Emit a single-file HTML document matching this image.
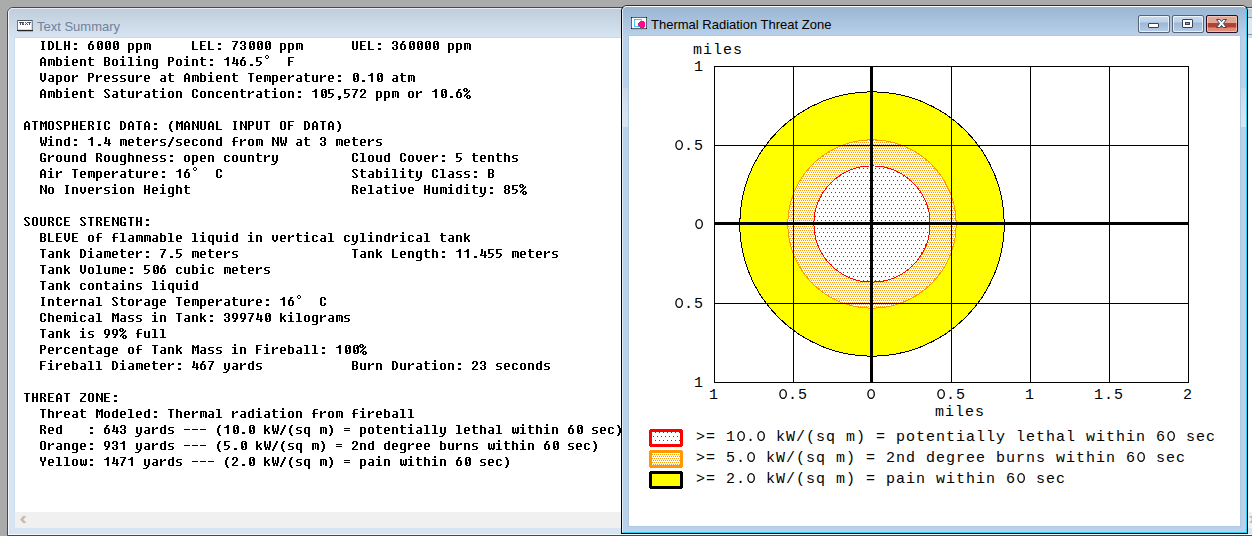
<!DOCTYPE html>
<html><head><meta charset="utf-8">
<style>
html,body{margin:0;padding:0;}
body{width:1252px;height:536px;overflow:hidden;position:relative;background:#ababab;font-family:"Liberation Sans",sans-serif;}
.abs{position:absolute;}
/* left window */
#lw{left:7px;top:7px;width:1300px;height:529px;box-sizing:border-box;border:1px solid #474849;border-radius:6px 6px 0 0;
 background:linear-gradient(to bottom,#bfcddb 0px,#d7e4f2 30px,#d7e4f2 100%);}
#lw .hl{left:0;top:0;right:0;bottom:0;border-left:1px solid #f4f8fc;border-top:1px solid #e6ecf6;border-bottom:1px solid #f4f8fc;border-radius:5px 5px 0 0;}
#lclient{left:7px;top:30px;width:1240px;height:474px;background:#fff;overflow:hidden;box-shadow:0 0 0 1px rgba(40,90,150,.07);}
#lscroll{left:7px;top:504px;width:1240px;height:16px;background:#f0f0f0;}
#ltitle{left:29px;top:11px;font-size:13px;color:#71829a;white-space:nowrap;}
/* right window */
#rw{left:621px;top:5px;width:627px;height:529px;box-sizing:border-box;border:1px solid #000;border-top-color:#2e2e2e;border-radius:6px 6px 0 0;
 background:linear-gradient(to bottom,#99b4d1 0px,#b9d1ea 30px,#b9d1ea 100%);}
#rw .cy{left:0;top:0;right:0;bottom:0;border-right:1px solid #28d2f2;border-bottom:1px solid #28d2f2;border-left:1px solid #e4edf6;border-top:1px solid #f8fbfe;border-radius:5px 5px 0 0;}
#rclient{left:7px;top:30px;width:611px;height:490px;background:#fff;overflow:hidden;box-shadow:0 0 0 1px rgba(40,90,150,.07);}
#rtitle{left:29px;top:11px;font-size:13px;color:#000;white-space:nowrap;}
.btn{top:9px;width:32px;height:18px;box-sizing:border-box;border:1px solid #5b6474;border-radius:2px;
 background:linear-gradient(to bottom,#c9dbef 0,#bcd2ea 6px,#9db7d4 7px,#b3cbe6 15px);}
.btn .in{left:0;top:0;right:0;bottom:0;border:1px solid rgba(255,255,255,.7);border-radius:2px;}
.cls{background:linear-gradient(to bottom,#e2a696 0,#e2a696 7px,#b3412f 7px,#b3412f 11px,#c3704f 11px,#c3704f 12px,#e08b78 12px,#e08b78 100%);border-color:#2d0a1e;}
svg text{font-family:"Liberation Mono",monospace;font-size:15px;letter-spacing:1px;fill:#000;}
</style></head><body>

<div id="lw" class="abs">
  <div class="abs hl"></div>
  <div id="ltitle" class="abs">Text Summary</div>
  <svg class="abs" style="left:9px;top:12px" width="16" height="12" viewBox="0 0 16 12" shape-rendering="crispEdges">
    <rect x="0" y="0" width="16" height="11" fill="#fff"/>
    <rect x="14" y="1" width="1" height="9" fill="#e6dcd6"/>
    <rect x="1" y="9" width="14" height="1" fill="#d9d9de"/>
    <rect x="0" y="0" width="16" height="1" fill="#4b5565"/>
    <rect x="0" y="0" width="1" height="11" fill="#6f7989"/>
    <rect x="15" y="0" width="1" height="11" fill="#7d8797"/>
    <rect x="0" y="10" width="16" height="1" fill="#262626"/>
    <rect x="1" y="11" width="15" height="1" fill="#bfae8e"/>
    <g fill="#4a5262">
      <rect x="2" y="2" width="3" height="1"/><rect x="3" y="3" width="1" height="2"/>
      <rect x="5" y="2" width="2" height="3"/><rect x="6" y="3" width="1" height="1" fill="#8a90a0"/>
      <rect x="8" y="2" width="1" height="1"/><rect x="10" y="2" width="1" height="1"/><rect x="9" y="3" width="1" height="1"/><rect x="8" y="4" width="1" height="1"/><rect x="10" y="4" width="1" height="1"/>
      <rect x="11" y="2" width="3" height="1"/><rect x="12" y="3" width="1" height="2"/>
    </g>
  </svg>
  <div id="lclient" class="abs"><svg class="abs" style="left:-15px;top:-38px" width="1252" height="536" shape-rendering="crispEdges"><defs><path id="g0" d="M0 2h3v1h-3zM-1 3h2v1h-2zM2 3h2v1h-2zM-1 4h2v1h-2zM2 4h2v1h-2zM5 4h1v1h-1zM0 5h3v1h-3zM4 5h2v1h-2zM3 6h2v1h-2zM2 7h2v1h-2zM1 8h2v1h-2zM0 9h2v1h-2zM3 9h3v1h-3zM0 10h1v1h-1zM2 10h2v1h-2zM5 10h2v1h-2zM2 11h2v1h-2zM5 11h2v1h-2zM3 12h3v1h-3z"/><path id="g1" d="M3 3h2v1h-2zM2 4h2v1h-2zM2 5h2v1h-2zM1 6h2v1h-2zM1 7h2v1h-2zM1 8h2v1h-2zM1 9h2v1h-2zM1 10h2v1h-2zM2 11h2v1h-2zM2 12h2v1h-2zM3 13h2v1h-2z"/><path id="g2" d="M1 3h2v1h-2zM2 4h2v1h-2zM2 5h2v1h-2zM3 6h2v1h-2zM3 7h2v1h-2zM3 8h2v1h-2zM3 9h2v1h-2zM3 10h2v1h-2zM2 11h2v1h-2zM2 12h2v1h-2zM1 13h2v1h-2z"/><path id="g3" d="M2 10h3v1h-3zM2 11h3v1h-3zM3 12h2v1h-2zM2 13h2v1h-2z"/><path id="g4" d="M0 7h6v1h-6z"/><path id="g5" d="M2 10h3v1h-3zM2 11h3v1h-3z"/><path id="g6" d="M4 3h2v1h-2zM4 4h2v1h-2zM3 5h2v1h-2zM3 6h2v1h-2zM2 7h2v1h-2zM2 8h2v1h-2zM1 9h2v1h-2zM1 10h2v1h-2zM0 11h2v1h-2zM0 12h2v1h-2z"/><path id="g7" d="M2 3h4v1h-4zM1 4h2v1h-2zM5 4h2v1h-2zM1 5h2v1h-2zM4 5h3v1h-3zM1 6h2v1h-2zM4 6h3v1h-3zM1 7h2v1h-2zM5 7h2v1h-2zM1 8h3v1h-3zM5 8h2v1h-2zM1 9h3v1h-3zM5 9h2v1h-2zM1 10h2v1h-2zM5 10h2v1h-2zM2 11h4v1h-4z"/><path id="g8" d="M3 3h2v1h-2zM2 4h3v1h-3zM0 5h5v1h-5zM3 6h2v1h-2zM3 7h2v1h-2zM3 8h2v1h-2zM3 9h2v1h-2zM3 10h2v1h-2zM3 11h2v1h-2z"/><path id="g9" d="M1 3h4v1h-4zM0 4h2v1h-2zM4 4h2v1h-2zM0 5h2v1h-2zM4 5h2v1h-2zM4 6h2v1h-2zM3 7h2v1h-2zM2 8h2v1h-2zM1 9h2v1h-2zM0 10h2v1h-2zM0 11h6v1h-6z"/><path id="g10" d="M1 3h4v1h-4zM0 4h2v1h-2zM4 4h2v1h-2zM0 5h2v1h-2zM4 5h2v1h-2zM4 6h2v1h-2zM2 7h3v1h-3zM4 8h2v1h-2zM0 9h2v1h-2zM4 9h2v1h-2zM0 10h2v1h-2zM4 10h2v1h-2zM1 11h4v1h-4z"/><path id="g11" d="M1 3h2v1h-2zM1 4h2v1h-2zM1 5h2v1h-2zM4 5h2v1h-2zM1 6h2v1h-2zM4 6h2v1h-2zM1 7h2v1h-2zM4 7h2v1h-2zM0 8h2v1h-2zM4 8h2v1h-2zM0 9h7v1h-7zM4 10h2v1h-2zM4 11h2v1h-2z"/><path id="g12" d="M0 3h6v1h-6zM0 4h2v1h-2zM0 5h2v1h-2zM0 6h2v1h-2zM0 7h5v1h-5zM4 8h2v1h-2zM4 9h2v1h-2zM3 10h2v1h-2zM0 11h4v1h-4z"/><path id="g13" d="M2 3h3v1h-3zM2 4h2v1h-2zM1 5h2v1h-2zM0 6h5v1h-5zM0 7h2v1h-2zM4 7h2v1h-2zM0 8h2v1h-2zM4 8h2v1h-2zM0 9h2v1h-2zM4 9h2v1h-2zM0 10h2v1h-2zM4 10h2v1h-2zM1 11h4v1h-4z"/><path id="g14" d="M0 3h6v1h-6zM4 4h2v1h-2zM3 5h2v1h-2zM3 6h2v1h-2zM2 7h2v1h-2zM2 8h2v1h-2zM1 9h2v1h-2zM1 10h2v1h-2zM1 11h2v1h-2z"/><path id="g15" d="M1 3h4v1h-4zM0 4h2v1h-2zM4 4h2v1h-2zM0 5h2v1h-2zM4 5h2v1h-2zM0 6h2v1h-2zM4 6h2v1h-2zM1 7h4v1h-4zM0 8h2v1h-2zM4 8h2v1h-2zM0 9h2v1h-2zM4 9h2v1h-2zM0 10h2v1h-2zM4 10h2v1h-2zM1 11h4v1h-4z"/><path id="g16" d="M1 3h4v1h-4zM0 4h2v1h-2zM4 4h2v1h-2zM0 5h2v1h-2zM4 5h2v1h-2zM0 6h2v1h-2zM4 6h2v1h-2zM0 7h2v1h-2zM4 7h2v1h-2zM1 8h5v1h-5zM3 9h2v1h-2zM2 10h2v1h-2zM1 11h3v1h-3z"/><path id="g17" d="M2 5h3v1h-3zM2 6h3v1h-3zM2 10h3v1h-3zM2 11h3v1h-3z"/><path id="g18" d="M0 6h6v1h-6zM0 8h6v1h-6z"/><path id="g19" d="M2 3h2v1h-2zM1 4h4v1h-4zM0 5h2v1h-2zM4 5h2v1h-2zM0 6h2v1h-2zM4 6h2v1h-2zM0 7h2v1h-2zM4 7h2v1h-2zM0 8h6v1h-6zM0 9h2v1h-2zM4 9h2v1h-2zM0 10h2v1h-2zM4 10h2v1h-2zM0 11h2v1h-2zM4 11h2v1h-2z"/><path id="g20" d="M0 3h5v1h-5zM0 4h2v1h-2zM4 4h2v1h-2zM0 5h2v1h-2zM4 5h2v1h-2zM0 6h2v1h-2zM4 6h2v1h-2zM0 7h5v1h-5zM0 8h2v1h-2zM4 8h2v1h-2zM0 9h2v1h-2zM4 9h2v1h-2zM0 10h2v1h-2zM4 10h2v1h-2zM0 11h5v1h-5z"/><path id="g21" d="M1 3h4v1h-4zM0 4h2v1h-2zM4 4h2v1h-2zM0 5h2v1h-2zM4 5h2v1h-2zM0 6h2v1h-2zM0 7h2v1h-2zM0 8h2v1h-2zM0 9h2v1h-2zM4 9h2v1h-2zM0 10h2v1h-2zM4 10h2v1h-2zM1 11h4v1h-4z"/><path id="g22" d="M0 3h4v1h-4zM0 4h2v1h-2zM3 4h2v1h-2zM0 5h2v1h-2zM4 5h2v1h-2zM0 6h2v1h-2zM4 6h2v1h-2zM0 7h2v1h-2zM4 7h2v1h-2zM0 8h2v1h-2zM4 8h2v1h-2zM0 9h2v1h-2zM4 9h2v1h-2zM0 10h2v1h-2zM3 10h2v1h-2zM0 11h4v1h-4z"/><path id="g23" d="M0 3h6v1h-6zM0 4h2v1h-2zM0 5h2v1h-2zM0 6h2v1h-2zM0 7h5v1h-5zM0 8h2v1h-2zM0 9h2v1h-2zM0 10h2v1h-2zM0 11h6v1h-6z"/><path id="g24" d="M0 3h6v1h-6zM0 4h2v1h-2zM0 5h2v1h-2zM0 6h2v1h-2zM0 7h5v1h-5zM0 8h2v1h-2zM0 9h2v1h-2zM0 10h2v1h-2zM0 11h2v1h-2z"/><path id="g25" d="M1 3h4v1h-4zM0 4h2v1h-2zM4 4h2v1h-2zM0 5h2v1h-2zM4 5h2v1h-2zM0 6h2v1h-2zM0 7h2v1h-2zM0 8h2v1h-2zM3 8h3v1h-3zM0 9h2v1h-2zM4 9h2v1h-2zM0 10h2v1h-2zM4 10h2v1h-2zM1 11h5v1h-5z"/><path id="g26" d="M0 3h2v1h-2zM4 3h2v1h-2zM0 4h2v1h-2zM4 4h2v1h-2zM0 5h2v1h-2zM4 5h2v1h-2zM0 6h2v1h-2zM4 6h2v1h-2zM0 7h6v1h-6zM0 8h2v1h-2zM4 8h2v1h-2zM0 9h2v1h-2zM4 9h2v1h-2zM0 10h2v1h-2zM4 10h2v1h-2zM0 11h2v1h-2zM4 11h2v1h-2z"/><path id="g27" d="M1 3h4v1h-4zM2 4h2v1h-2zM2 5h2v1h-2zM2 6h2v1h-2zM2 7h2v1h-2zM2 8h2v1h-2zM2 9h2v1h-2zM2 10h2v1h-2zM1 11h4v1h-4z"/><path id="g28" d="M0 3h2v1h-2zM0 4h2v1h-2zM0 5h2v1h-2zM0 6h2v1h-2zM0 7h2v1h-2zM0 8h2v1h-2zM0 9h2v1h-2zM0 10h2v1h-2zM0 11h6v1h-6z"/><path id="g29" d="M0 3h2v1h-2zM5 3h2v1h-2zM0 4h3v1h-3zM4 4h3v1h-3zM0 5h7v1h-7zM0 6h2v1h-2zM3 6h1v1h-1zM5 6h2v1h-2zM0 7h2v1h-2zM3 7h1v1h-1zM5 7h2v1h-2zM0 8h2v1h-2zM3 8h1v1h-1zM5 8h2v1h-2zM0 9h2v1h-2zM5 9h2v1h-2zM0 10h2v1h-2zM5 10h2v1h-2zM0 11h2v1h-2zM5 11h2v1h-2z"/><path id="g30" d="M0 3h2v1h-2zM5 3h2v1h-2zM0 4h3v1h-3zM5 4h2v1h-2zM0 5h3v1h-3zM5 5h2v1h-2zM0 6h2v1h-2zM3 6h1v1h-1zM5 6h2v1h-2zM0 7h2v1h-2zM3 7h1v1h-1zM5 7h2v1h-2zM0 8h2v1h-2zM4 8h3v1h-3zM0 9h2v1h-2zM4 9h3v1h-3zM0 10h2v1h-2zM5 10h2v1h-2zM0 11h2v1h-2zM5 11h2v1h-2z"/><path id="g31" d="M1 3h4v1h-4zM0 4h2v1h-2zM4 4h2v1h-2zM0 5h2v1h-2zM4 5h2v1h-2zM0 6h2v1h-2zM4 6h2v1h-2zM0 7h2v1h-2zM4 7h2v1h-2zM0 8h2v1h-2zM4 8h2v1h-2zM0 9h2v1h-2zM4 9h2v1h-2zM0 10h2v1h-2zM4 10h2v1h-2zM1 11h4v1h-4z"/><path id="g32" d="M0 3h5v1h-5zM0 4h2v1h-2zM4 4h2v1h-2zM0 5h2v1h-2zM4 5h2v1h-2zM0 6h2v1h-2zM4 6h2v1h-2zM0 7h5v1h-5zM0 8h2v1h-2zM0 9h2v1h-2zM0 10h2v1h-2zM0 11h2v1h-2z"/><path id="g33" d="M0 3h5v1h-5zM0 4h2v1h-2zM4 4h2v1h-2zM0 5h2v1h-2zM4 5h2v1h-2zM0 6h2v1h-2zM4 6h2v1h-2zM0 7h4v1h-4zM0 8h2v1h-2zM3 8h2v1h-2zM0 9h2v1h-2zM4 9h2v1h-2zM0 10h2v1h-2zM4 10h2v1h-2zM0 11h2v1h-2zM4 11h2v1h-2z"/><path id="g34" d="M1 3h4v1h-4zM0 4h2v1h-2zM4 4h2v1h-2zM0 5h2v1h-2zM1 6h2v1h-2zM2 7h2v1h-2zM3 8h2v1h-2zM4 9h2v1h-2zM0 10h2v1h-2zM4 10h2v1h-2zM1 11h4v1h-4z"/><path id="g35" d="M0 3h6v1h-6zM2 4h2v1h-2zM2 5h2v1h-2zM2 6h2v1h-2zM2 7h2v1h-2zM2 8h2v1h-2zM2 9h2v1h-2zM2 10h2v1h-2zM2 11h2v1h-2z"/><path id="g36" d="M0 3h2v1h-2zM4 3h2v1h-2zM0 4h2v1h-2zM4 4h2v1h-2zM0 5h2v1h-2zM4 5h2v1h-2zM0 6h2v1h-2zM4 6h2v1h-2zM0 7h2v1h-2zM4 7h2v1h-2zM0 8h2v1h-2zM4 8h2v1h-2zM0 9h2v1h-2zM4 9h2v1h-2zM0 10h2v1h-2zM4 10h2v1h-2zM1 11h4v1h-4z"/><path id="g37" d="M0 3h2v1h-2zM4 3h2v1h-2zM0 4h2v1h-2zM4 4h2v1h-2zM0 5h2v1h-2zM4 5h2v1h-2zM0 6h2v1h-2zM4 6h2v1h-2zM0 7h2v1h-2zM4 7h2v1h-2zM0 8h2v1h-2zM4 8h2v1h-2zM0 9h2v1h-2zM4 9h2v1h-2zM1 10h4v1h-4zM2 11h2v1h-2z"/><path id="g38" d="M0 3h2v1h-2zM5 3h2v1h-2zM0 4h2v1h-2zM5 4h2v1h-2zM0 5h2v1h-2zM5 5h2v1h-2zM0 6h2v1h-2zM3 6h1v1h-1zM5 6h2v1h-2zM0 7h2v1h-2zM3 7h1v1h-1zM5 7h2v1h-2zM0 8h2v1h-2zM3 8h1v1h-1zM5 8h2v1h-2zM1 9h5v1h-5zM1 10h2v1h-2zM4 10h2v1h-2zM1 11h2v1h-2zM4 11h2v1h-2z"/><path id="g39" d="M0 3h2v1h-2zM4 3h2v1h-2zM0 4h2v1h-2zM4 4h2v1h-2zM0 5h2v1h-2zM4 5h2v1h-2zM0 6h2v1h-2zM4 6h2v1h-2zM1 7h4v1h-4zM2 8h2v1h-2zM2 9h2v1h-2zM2 10h2v1h-2zM2 11h2v1h-2z"/><path id="g40" d="M0 3h6v1h-6zM4 4h2v1h-2zM4 5h2v1h-2zM3 6h2v1h-2zM2 7h2v1h-2zM1 8h2v1h-2zM0 9h2v1h-2zM0 10h2v1h-2zM0 11h6v1h-6z"/><path id="g41" d="M1 5h4v1h-4zM4 6h2v1h-2zM4 7h2v1h-2zM1 8h5v1h-5zM0 9h2v1h-2zM4 9h2v1h-2zM0 10h2v1h-2zM4 10h2v1h-2zM1 11h5v1h-5z"/><path id="g42" d="M0 3h2v1h-2zM0 4h2v1h-2zM0 5h5v1h-5zM0 6h2v1h-2zM4 6h2v1h-2zM0 7h2v1h-2zM4 7h2v1h-2zM0 8h2v1h-2zM4 8h2v1h-2zM0 9h2v1h-2zM4 9h2v1h-2zM0 10h2v1h-2zM4 10h2v1h-2zM0 11h5v1h-5z"/><path id="g43" d="M1 5h4v1h-4zM0 6h2v1h-2zM4 6h2v1h-2zM0 7h2v1h-2zM0 8h2v1h-2zM0 9h2v1h-2zM0 10h2v1h-2zM4 10h2v1h-2zM1 11h4v1h-4z"/><path id="g44" d="M4 3h2v1h-2zM4 4h2v1h-2zM1 5h5v1h-5zM0 6h2v1h-2zM4 6h2v1h-2zM0 7h2v1h-2zM4 7h2v1h-2zM0 8h2v1h-2zM4 8h2v1h-2zM0 9h2v1h-2zM4 9h2v1h-2zM0 10h2v1h-2zM4 10h2v1h-2zM1 11h5v1h-5z"/><path id="g45" d="M1 5h4v1h-4zM0 6h2v1h-2zM4 6h2v1h-2zM0 7h2v1h-2zM4 7h2v1h-2zM0 8h6v1h-6zM0 9h2v1h-2zM0 10h2v1h-2zM1 11h4v1h-4z"/><path id="g46" d="M2 3h4v1h-4zM1 4h2v1h-2zM1 5h2v1h-2zM1 6h2v1h-2zM0 7h6v1h-6zM1 8h2v1h-2zM1 9h2v1h-2zM1 10h2v1h-2zM1 11h2v1h-2z"/><path id="g47" d="M1 5h5v1h-5zM0 6h2v1h-2zM4 6h2v1h-2zM0 7h2v1h-2zM4 7h2v1h-2zM0 8h2v1h-2zM4 8h2v1h-2zM0 9h2v1h-2zM4 9h2v1h-2zM0 10h2v1h-2zM4 10h2v1h-2zM1 11h5v1h-5zM4 12h2v1h-2zM4 13h2v1h-2zM0 14h5v1h-5z"/><path id="g48" d="M0 3h2v1h-2zM0 4h2v1h-2zM0 5h5v1h-5zM0 6h2v1h-2zM4 6h2v1h-2zM0 7h2v1h-2zM4 7h2v1h-2zM0 8h2v1h-2zM4 8h2v1h-2zM0 9h2v1h-2zM4 9h2v1h-2zM0 10h2v1h-2zM4 10h2v1h-2zM0 11h2v1h-2zM4 11h2v1h-2z"/><path id="g49" d="M2 2h2v1h-2zM2 3h2v1h-2zM0 5h4v1h-4zM2 6h2v1h-2zM2 7h2v1h-2zM2 8h2v1h-2zM2 9h2v1h-2zM2 10h2v1h-2zM0 11h6v1h-6z"/><path id="g50" d="M0 3h2v1h-2zM0 4h2v1h-2zM0 5h2v1h-2zM4 5h2v1h-2zM0 6h2v1h-2zM3 6h2v1h-2zM0 7h4v1h-4zM0 8h4v1h-4zM0 9h2v1h-2zM3 9h2v1h-2zM0 10h2v1h-2zM4 10h2v1h-2zM0 11h2v1h-2zM4 11h2v1h-2z"/><path id="g51" d="M0 3h4v1h-4zM2 4h2v1h-2zM2 5h2v1h-2zM2 6h2v1h-2zM2 7h2v1h-2zM2 8h2v1h-2zM2 9h2v1h-2zM2 10h2v1h-2zM0 11h6v1h-6z"/><path id="g52" d="M0 5h6v1h-6zM0 6h2v1h-2zM3 6h1v1h-1zM5 6h2v1h-2zM0 7h2v1h-2zM3 7h1v1h-1zM5 7h2v1h-2zM0 8h2v1h-2zM3 8h1v1h-1zM5 8h2v1h-2zM0 9h2v1h-2zM3 9h1v1h-1zM5 9h2v1h-2zM0 10h2v1h-2zM3 10h1v1h-1zM5 10h2v1h-2zM0 11h2v1h-2zM5 11h2v1h-2z"/><path id="g53" d="M0 5h5v1h-5zM0 6h2v1h-2zM4 6h2v1h-2zM0 7h2v1h-2zM4 7h2v1h-2zM0 8h2v1h-2zM4 8h2v1h-2zM0 9h2v1h-2zM4 9h2v1h-2zM0 10h2v1h-2zM4 10h2v1h-2zM0 11h2v1h-2zM4 11h2v1h-2z"/><path id="g54" d="M1 5h4v1h-4zM0 6h2v1h-2zM4 6h2v1h-2zM0 7h2v1h-2zM4 7h2v1h-2zM0 8h2v1h-2zM4 8h2v1h-2zM0 9h2v1h-2zM4 9h2v1h-2zM0 10h2v1h-2zM4 10h2v1h-2zM1 11h4v1h-4z"/><path id="g55" d="M0 5h5v1h-5zM0 6h2v1h-2zM4 6h2v1h-2zM0 7h2v1h-2zM4 7h2v1h-2zM0 8h2v1h-2zM4 8h2v1h-2zM0 9h2v1h-2zM4 9h2v1h-2zM0 10h2v1h-2zM4 10h2v1h-2zM0 11h5v1h-5zM0 12h2v1h-2zM0 13h2v1h-2zM0 14h2v1h-2z"/><path id="g56" d="M1 5h5v1h-5zM0 6h2v1h-2zM4 6h2v1h-2zM0 7h2v1h-2zM4 7h2v1h-2zM0 8h2v1h-2zM4 8h2v1h-2zM0 9h2v1h-2zM4 9h2v1h-2zM0 10h2v1h-2zM4 10h2v1h-2zM1 11h5v1h-5zM4 12h2v1h-2zM4 13h2v1h-2zM4 14h2v1h-2z"/><path id="g57" d="M0 5h2v1h-2zM4 5h2v1h-2zM0 6h2v1h-2zM3 6h3v1h-3zM0 7h3v1h-3zM0 8h2v1h-2zM0 9h2v1h-2zM0 10h2v1h-2zM0 11h2v1h-2z"/><path id="g58" d="M1 5h5v1h-5zM0 6h2v1h-2zM0 7h2v1h-2zM1 8h4v1h-4zM4 9h2v1h-2zM4 10h2v1h-2zM0 11h5v1h-5z"/><path id="g59" d="M1 3h2v1h-2zM1 4h2v1h-2zM0 5h6v1h-6zM1 6h2v1h-2zM1 7h2v1h-2zM1 8h2v1h-2zM1 9h2v1h-2zM1 10h2v1h-2zM2 11h4v1h-4z"/><path id="g60" d="M0 5h2v1h-2zM4 5h2v1h-2zM0 6h2v1h-2zM4 6h2v1h-2zM0 7h2v1h-2zM4 7h2v1h-2zM0 8h2v1h-2zM4 8h2v1h-2zM0 9h2v1h-2zM4 9h2v1h-2zM0 10h2v1h-2zM4 10h2v1h-2zM1 11h5v1h-5z"/><path id="g61" d="M0 5h2v1h-2zM4 5h2v1h-2zM0 6h2v1h-2zM4 6h2v1h-2zM0 7h2v1h-2zM4 7h2v1h-2zM0 8h2v1h-2zM4 8h2v1h-2zM0 9h2v1h-2zM4 9h2v1h-2zM1 10h4v1h-4zM2 11h2v1h-2z"/><path id="g62" d="M0 5h2v1h-2zM5 5h2v1h-2zM0 6h2v1h-2zM3 6h1v1h-1zM5 6h2v1h-2zM0 7h2v1h-2zM3 7h1v1h-1zM5 7h2v1h-2zM0 8h2v1h-2zM3 8h1v1h-1zM5 8h2v1h-2zM0 9h2v1h-2zM3 9h1v1h-1zM5 9h2v1h-2zM0 10h7v1h-7zM1 11h2v1h-2zM4 11h2v1h-2z"/><path id="g63" d="M0 5h2v1h-2zM4 5h2v1h-2zM0 6h2v1h-2zM4 6h2v1h-2zM0 7h2v1h-2zM4 7h2v1h-2zM0 8h2v1h-2zM4 8h2v1h-2zM0 9h2v1h-2zM4 9h2v1h-2zM0 10h2v1h-2zM4 10h2v1h-2zM1 11h4v1h-4zM3 12h2v1h-2zM2 13h2v1h-2zM-1 14h4v1h-4z"/><path id="g64" d="M2 1h2v1h-2zM1 2h1v1h-1zM4 2h1v1h-1zM1 3h1v1h-1zM4 3h1v1h-1zM2 4h2v1h-2z"/></defs><g fill="#000"><use href="#g27" x="40" y="38"/><use href="#g22" x="48" y="38"/><use href="#g28" x="56" y="38"/><use href="#g26" x="64" y="38"/><use href="#g17" x="72" y="38"/><use href="#g13" x="88" y="38"/><use href="#g7" x="96" y="38"/><use href="#g7" x="104" y="38"/><use href="#g7" x="112" y="38"/><use href="#g55" x="128" y="38"/><use href="#g55" x="136" y="38"/><use href="#g52" x="144" y="38"/><use href="#g28" x="192" y="38"/><use href="#g23" x="200" y="38"/><use href="#g28" x="208" y="38"/><use href="#g17" x="216" y="38"/><use href="#g14" x="232" y="38"/><use href="#g10" x="240" y="38"/><use href="#g7" x="248" y="38"/><use href="#g7" x="256" y="38"/><use href="#g7" x="264" y="38"/><use href="#g55" x="280" y="38"/><use href="#g55" x="288" y="38"/><use href="#g52" x="296" y="38"/><use href="#g36" x="352" y="38"/><use href="#g23" x="360" y="38"/><use href="#g28" x="368" y="38"/><use href="#g17" x="376" y="38"/><use href="#g10" x="392" y="38"/><use href="#g13" x="400" y="38"/><use href="#g7" x="408" y="38"/><use href="#g7" x="416" y="38"/><use href="#g7" x="424" y="38"/><use href="#g7" x="432" y="38"/><use href="#g55" x="448" y="38"/><use href="#g55" x="456" y="38"/><use href="#g52" x="464" y="38"/><use href="#g19" x="40" y="54"/><use href="#g52" x="48" y="54"/><use href="#g42" x="56" y="54"/><use href="#g49" x="64" y="54"/><use href="#g45" x="72" y="54"/><use href="#g53" x="80" y="54"/><use href="#g59" x="88" y="54"/><use href="#g20" x="104" y="54"/><use href="#g54" x="112" y="54"/><use href="#g49" x="120" y="54"/><use href="#g51" x="128" y="54"/><use href="#g49" x="136" y="54"/><use href="#g53" x="144" y="54"/><use href="#g47" x="152" y="54"/><use href="#g32" x="168" y="54"/><use href="#g54" x="176" y="54"/><use href="#g49" x="184" y="54"/><use href="#g53" x="192" y="54"/><use href="#g59" x="200" y="54"/><use href="#g17" x="208" y="54"/><use href="#g8" x="224" y="54"/><use href="#g11" x="232" y="54"/><use href="#g13" x="240" y="54"/><use href="#g5" x="248" y="54"/><use href="#g12" x="256" y="54"/><use href="#g64" x="264" y="54"/><use href="#g24" x="288" y="54"/><use href="#g37" x="40" y="70"/><use href="#g41" x="48" y="70"/><use href="#g55" x="56" y="70"/><use href="#g54" x="64" y="70"/><use href="#g57" x="72" y="70"/><use href="#g32" x="88" y="70"/><use href="#g57" x="96" y="70"/><use href="#g45" x="104" y="70"/><use href="#g58" x="112" y="70"/><use href="#g58" x="120" y="70"/><use href="#g60" x="128" y="70"/><use href="#g57" x="136" y="70"/><use href="#g45" x="144" y="70"/><use href="#g41" x="160" y="70"/><use href="#g59" x="168" y="70"/><use href="#g19" x="184" y="70"/><use href="#g52" x="192" y="70"/><use href="#g42" x="200" y="70"/><use href="#g49" x="208" y="70"/><use href="#g45" x="216" y="70"/><use href="#g53" x="224" y="70"/><use href="#g59" x="232" y="70"/><use href="#g35" x="248" y="70"/><use href="#g45" x="256" y="70"/><use href="#g52" x="264" y="70"/><use href="#g55" x="272" y="70"/><use href="#g45" x="280" y="70"/><use href="#g57" x="288" y="70"/><use href="#g41" x="296" y="70"/><use href="#g59" x="304" y="70"/><use href="#g60" x="312" y="70"/><use href="#g57" x="320" y="70"/><use href="#g45" x="328" y="70"/><use href="#g17" x="336" y="70"/><use href="#g7" x="352" y="70"/><use href="#g5" x="360" y="70"/><use href="#g8" x="368" y="70"/><use href="#g7" x="376" y="70"/><use href="#g41" x="392" y="70"/><use href="#g59" x="400" y="70"/><use href="#g52" x="408" y="70"/><use href="#g19" x="40" y="86"/><use href="#g52" x="48" y="86"/><use href="#g42" x="56" y="86"/><use href="#g49" x="64" y="86"/><use href="#g45" x="72" y="86"/><use href="#g53" x="80" y="86"/><use href="#g59" x="88" y="86"/><use href="#g34" x="104" y="86"/><use href="#g41" x="112" y="86"/><use href="#g59" x="120" y="86"/><use href="#g60" x="128" y="86"/><use href="#g57" x="136" y="86"/><use href="#g41" x="144" y="86"/><use href="#g59" x="152" y="86"/><use href="#g49" x="160" y="86"/><use href="#g54" x="168" y="86"/><use href="#g53" x="176" y="86"/><use href="#g21" x="192" y="86"/><use href="#g54" x="200" y="86"/><use href="#g53" x="208" y="86"/><use href="#g43" x="216" y="86"/><use href="#g45" x="224" y="86"/><use href="#g53" x="232" y="86"/><use href="#g59" x="240" y="86"/><use href="#g57" x="248" y="86"/><use href="#g41" x="256" y="86"/><use href="#g59" x="264" y="86"/><use href="#g49" x="272" y="86"/><use href="#g54" x="280" y="86"/><use href="#g53" x="288" y="86"/><use href="#g17" x="296" y="86"/><use href="#g8" x="312" y="86"/><use href="#g7" x="320" y="86"/><use href="#g12" x="328" y="86"/><use href="#g3" x="336" y="86"/><use href="#g12" x="344" y="86"/><use href="#g14" x="352" y="86"/><use href="#g9" x="360" y="86"/><use href="#g55" x="376" y="86"/><use href="#g55" x="384" y="86"/><use href="#g52" x="392" y="86"/><use href="#g54" x="408" y="86"/><use href="#g57" x="416" y="86"/><use href="#g8" x="432" y="86"/><use href="#g7" x="440" y="86"/><use href="#g5" x="448" y="86"/><use href="#g13" x="456" y="86"/><use href="#g0" x="464" y="86"/><use href="#g19" x="24" y="118"/><use href="#g35" x="32" y="118"/><use href="#g29" x="40" y="118"/><use href="#g31" x="48" y="118"/><use href="#g34" x="56" y="118"/><use href="#g32" x="64" y="118"/><use href="#g26" x="72" y="118"/><use href="#g23" x="80" y="118"/><use href="#g33" x="88" y="118"/><use href="#g27" x="96" y="118"/><use href="#g21" x="104" y="118"/><use href="#g22" x="120" y="118"/><use href="#g19" x="128" y="118"/><use href="#g35" x="136" y="118"/><use href="#g19" x="144" y="118"/><use href="#g17" x="152" y="118"/><use href="#g1" x="168" y="118"/><use href="#g29" x="176" y="118"/><use href="#g19" x="184" y="118"/><use href="#g30" x="192" y="118"/><use href="#g36" x="200" y="118"/><use href="#g19" x="208" y="118"/><use href="#g28" x="216" y="118"/><use href="#g27" x="232" y="118"/><use href="#g30" x="240" y="118"/><use href="#g32" x="248" y="118"/><use href="#g36" x="256" y="118"/><use href="#g35" x="264" y="118"/><use href="#g31" x="280" y="118"/><use href="#g24" x="288" y="118"/><use href="#g22" x="304" y="118"/><use href="#g19" x="312" y="118"/><use href="#g35" x="320" y="118"/><use href="#g19" x="328" y="118"/><use href="#g2" x="336" y="118"/><use href="#g38" x="40" y="134"/><use href="#g49" x="48" y="134"/><use href="#g53" x="56" y="134"/><use href="#g44" x="64" y="134"/><use href="#g17" x="72" y="134"/><use href="#g8" x="88" y="134"/><use href="#g5" x="96" y="134"/><use href="#g11" x="104" y="134"/><use href="#g52" x="120" y="134"/><use href="#g45" x="128" y="134"/><use href="#g59" x="136" y="134"/><use href="#g45" x="144" y="134"/><use href="#g57" x="152" y="134"/><use href="#g58" x="160" y="134"/><use href="#g6" x="168" y="134"/><use href="#g58" x="176" y="134"/><use href="#g45" x="184" y="134"/><use href="#g43" x="192" y="134"/><use href="#g54" x="200" y="134"/><use href="#g53" x="208" y="134"/><use href="#g44" x="216" y="134"/><use href="#g46" x="232" y="134"/><use href="#g57" x="240" y="134"/><use href="#g54" x="248" y="134"/><use href="#g52" x="256" y="134"/><use href="#g30" x="272" y="134"/><use href="#g38" x="280" y="134"/><use href="#g41" x="296" y="134"/><use href="#g59" x="304" y="134"/><use href="#g10" x="320" y="134"/><use href="#g52" x="336" y="134"/><use href="#g45" x="344" y="134"/><use href="#g59" x="352" y="134"/><use href="#g45" x="360" y="134"/><use href="#g57" x="368" y="134"/><use href="#g58" x="376" y="134"/><use href="#g25" x="40" y="150"/><use href="#g57" x="48" y="150"/><use href="#g54" x="56" y="150"/><use href="#g60" x="64" y="150"/><use href="#g53" x="72" y="150"/><use href="#g44" x="80" y="150"/><use href="#g33" x="96" y="150"/><use href="#g54" x="104" y="150"/><use href="#g60" x="112" y="150"/><use href="#g47" x="120" y="150"/><use href="#g48" x="128" y="150"/><use href="#g53" x="136" y="150"/><use href="#g45" x="144" y="150"/><use href="#g58" x="152" y="150"/><use href="#g58" x="160" y="150"/><use href="#g17" x="168" y="150"/><use href="#g54" x="184" y="150"/><use href="#g55" x="192" y="150"/><use href="#g45" x="200" y="150"/><use href="#g53" x="208" y="150"/><use href="#g43" x="224" y="150"/><use href="#g54" x="232" y="150"/><use href="#g60" x="240" y="150"/><use href="#g53" x="248" y="150"/><use href="#g59" x="256" y="150"/><use href="#g57" x="264" y="150"/><use href="#g63" x="272" y="150"/><use href="#g21" x="352" y="150"/><use href="#g51" x="360" y="150"/><use href="#g54" x="368" y="150"/><use href="#g60" x="376" y="150"/><use href="#g44" x="384" y="150"/><use href="#g21" x="400" y="150"/><use href="#g54" x="408" y="150"/><use href="#g61" x="416" y="150"/><use href="#g45" x="424" y="150"/><use href="#g57" x="432" y="150"/><use href="#g17" x="440" y="150"/><use href="#g12" x="456" y="150"/><use href="#g59" x="472" y="150"/><use href="#g45" x="480" y="150"/><use href="#g53" x="488" y="150"/><use href="#g59" x="496" y="150"/><use href="#g48" x="504" y="150"/><use href="#g58" x="512" y="150"/><use href="#g19" x="40" y="166"/><use href="#g49" x="48" y="166"/><use href="#g57" x="56" y="166"/><use href="#g35" x="72" y="166"/><use href="#g45" x="80" y="166"/><use href="#g52" x="88" y="166"/><use href="#g55" x="96" y="166"/><use href="#g45" x="104" y="166"/><use href="#g57" x="112" y="166"/><use href="#g41" x="120" y="166"/><use href="#g59" x="128" y="166"/><use href="#g60" x="136" y="166"/><use href="#g57" x="144" y="166"/><use href="#g45" x="152" y="166"/><use href="#g17" x="160" y="166"/><use href="#g8" x="176" y="166"/><use href="#g13" x="184" y="166"/><use href="#g64" x="192" y="166"/><use href="#g21" x="216" y="166"/><use href="#g34" x="352" y="166"/><use href="#g59" x="360" y="166"/><use href="#g41" x="368" y="166"/><use href="#g42" x="376" y="166"/><use href="#g49" x="384" y="166"/><use href="#g51" x="392" y="166"/><use href="#g49" x="400" y="166"/><use href="#g59" x="408" y="166"/><use href="#g63" x="416" y="166"/><use href="#g21" x="432" y="166"/><use href="#g51" x="440" y="166"/><use href="#g41" x="448" y="166"/><use href="#g58" x="456" y="166"/><use href="#g58" x="464" y="166"/><use href="#g17" x="472" y="166"/><use href="#g20" x="488" y="166"/><use href="#g30" x="40" y="182"/><use href="#g54" x="48" y="182"/><use href="#g27" x="64" y="182"/><use href="#g53" x="72" y="182"/><use href="#g61" x="80" y="182"/><use href="#g45" x="88" y="182"/><use href="#g57" x="96" y="182"/><use href="#g58" x="104" y="182"/><use href="#g49" x="112" y="182"/><use href="#g54" x="120" y="182"/><use href="#g53" x="128" y="182"/><use href="#g26" x="144" y="182"/><use href="#g45" x="152" y="182"/><use href="#g49" x="160" y="182"/><use href="#g47" x="168" y="182"/><use href="#g48" x="176" y="182"/><use href="#g59" x="184" y="182"/><use href="#g33" x="352" y="182"/><use href="#g45" x="360" y="182"/><use href="#g51" x="368" y="182"/><use href="#g41" x="376" y="182"/><use href="#g59" x="384" y="182"/><use href="#g49" x="392" y="182"/><use href="#g61" x="400" y="182"/><use href="#g45" x="408" y="182"/><use href="#g26" x="424" y="182"/><use href="#g60" x="432" y="182"/><use href="#g52" x="440" y="182"/><use href="#g49" x="448" y="182"/><use href="#g44" x="456" y="182"/><use href="#g49" x="464" y="182"/><use href="#g59" x="472" y="182"/><use href="#g63" x="480" y="182"/><use href="#g17" x="488" y="182"/><use href="#g15" x="504" y="182"/><use href="#g12" x="512" y="182"/><use href="#g0" x="520" y="182"/><use href="#g34" x="24" y="214"/><use href="#g31" x="32" y="214"/><use href="#g36" x="40" y="214"/><use href="#g33" x="48" y="214"/><use href="#g21" x="56" y="214"/><use href="#g23" x="64" y="214"/><use href="#g34" x="80" y="214"/><use href="#g35" x="88" y="214"/><use href="#g33" x="96" y="214"/><use href="#g23" x="104" y="214"/><use href="#g30" x="112" y="214"/><use href="#g25" x="120" y="214"/><use href="#g35" x="128" y="214"/><use href="#g26" x="136" y="214"/><use href="#g17" x="144" y="214"/><use href="#g20" x="40" y="230"/><use href="#g28" x="48" y="230"/><use href="#g23" x="56" y="230"/><use href="#g37" x="64" y="230"/><use href="#g23" x="72" y="230"/><use href="#g54" x="88" y="230"/><use href="#g46" x="96" y="230"/><use href="#g46" x="112" y="230"/><use href="#g51" x="120" y="230"/><use href="#g41" x="128" y="230"/><use href="#g52" x="136" y="230"/><use href="#g52" x="144" y="230"/><use href="#g41" x="152" y="230"/><use href="#g42" x="160" y="230"/><use href="#g51" x="168" y="230"/><use href="#g45" x="176" y="230"/><use href="#g51" x="192" y="230"/><use href="#g49" x="200" y="230"/><use href="#g56" x="208" y="230"/><use href="#g60" x="216" y="230"/><use href="#g49" x="224" y="230"/><use href="#g44" x="232" y="230"/><use href="#g49" x="248" y="230"/><use href="#g53" x="256" y="230"/><use href="#g61" x="272" y="230"/><use href="#g45" x="280" y="230"/><use href="#g57" x="288" y="230"/><use href="#g59" x="296" y="230"/><use href="#g49" x="304" y="230"/><use href="#g43" x="312" y="230"/><use href="#g41" x="320" y="230"/><use href="#g51" x="328" y="230"/><use href="#g43" x="344" y="230"/><use href="#g63" x="352" y="230"/><use href="#g51" x="360" y="230"/><use href="#g49" x="368" y="230"/><use href="#g53" x="376" y="230"/><use href="#g44" x="384" y="230"/><use href="#g57" x="392" y="230"/><use href="#g49" x="400" y="230"/><use href="#g43" x="408" y="230"/><use href="#g41" x="416" y="230"/><use href="#g51" x="424" y="230"/><use href="#g59" x="440" y="230"/><use href="#g41" x="448" y="230"/><use href="#g53" x="456" y="230"/><use href="#g50" x="464" y="230"/><use href="#g35" x="40" y="246"/><use href="#g41" x="48" y="246"/><use href="#g53" x="56" y="246"/><use href="#g50" x="64" y="246"/><use href="#g22" x="80" y="246"/><use href="#g49" x="88" y="246"/><use href="#g41" x="96" y="246"/><use href="#g52" x="104" y="246"/><use href="#g45" x="112" y="246"/><use href="#g59" x="120" y="246"/><use href="#g45" x="128" y="246"/><use href="#g57" x="136" y="246"/><use href="#g17" x="144" y="246"/><use href="#g14" x="160" y="246"/><use href="#g5" x="168" y="246"/><use href="#g12" x="176" y="246"/><use href="#g52" x="192" y="246"/><use href="#g45" x="200" y="246"/><use href="#g59" x="208" y="246"/><use href="#g45" x="216" y="246"/><use href="#g57" x="224" y="246"/><use href="#g58" x="232" y="246"/><use href="#g35" x="352" y="246"/><use href="#g41" x="360" y="246"/><use href="#g53" x="368" y="246"/><use href="#g50" x="376" y="246"/><use href="#g28" x="392" y="246"/><use href="#g45" x="400" y="246"/><use href="#g53" x="408" y="246"/><use href="#g47" x="416" y="246"/><use href="#g59" x="424" y="246"/><use href="#g48" x="432" y="246"/><use href="#g17" x="440" y="246"/><use href="#g8" x="456" y="246"/><use href="#g8" x="464" y="246"/><use href="#g5" x="472" y="246"/><use href="#g11" x="480" y="246"/><use href="#g12" x="488" y="246"/><use href="#g12" x="496" y="246"/><use href="#g52" x="512" y="246"/><use href="#g45" x="520" y="246"/><use href="#g59" x="528" y="246"/><use href="#g45" x="536" y="246"/><use href="#g57" x="544" y="246"/><use href="#g58" x="552" y="246"/><use href="#g35" x="40" y="262"/><use href="#g41" x="48" y="262"/><use href="#g53" x="56" y="262"/><use href="#g50" x="64" y="262"/><use href="#g37" x="80" y="262"/><use href="#g54" x="88" y="262"/><use href="#g51" x="96" y="262"/><use href="#g60" x="104" y="262"/><use href="#g52" x="112" y="262"/><use href="#g45" x="120" y="262"/><use href="#g17" x="128" y="262"/><use href="#g12" x="144" y="262"/><use href="#g7" x="152" y="262"/><use href="#g13" x="160" y="262"/><use href="#g43" x="176" y="262"/><use href="#g60" x="184" y="262"/><use href="#g42" x="192" y="262"/><use href="#g49" x="200" y="262"/><use href="#g43" x="208" y="262"/><use href="#g52" x="224" y="262"/><use href="#g45" x="232" y="262"/><use href="#g59" x="240" y="262"/><use href="#g45" x="248" y="262"/><use href="#g57" x="256" y="262"/><use href="#g58" x="264" y="262"/><use href="#g35" x="40" y="278"/><use href="#g41" x="48" y="278"/><use href="#g53" x="56" y="278"/><use href="#g50" x="64" y="278"/><use href="#g43" x="80" y="278"/><use href="#g54" x="88" y="278"/><use href="#g53" x="96" y="278"/><use href="#g59" x="104" y="278"/><use href="#g41" x="112" y="278"/><use href="#g49" x="120" y="278"/><use href="#g53" x="128" y="278"/><use href="#g58" x="136" y="278"/><use href="#g51" x="152" y="278"/><use href="#g49" x="160" y="278"/><use href="#g56" x="168" y="278"/><use href="#g60" x="176" y="278"/><use href="#g49" x="184" y="278"/><use href="#g44" x="192" y="278"/><use href="#g27" x="40" y="294"/><use href="#g53" x="48" y="294"/><use href="#g59" x="56" y="294"/><use href="#g45" x="64" y="294"/><use href="#g57" x="72" y="294"/><use href="#g53" x="80" y="294"/><use href="#g41" x="88" y="294"/><use href="#g51" x="96" y="294"/><use href="#g34" x="112" y="294"/><use href="#g59" x="120" y="294"/><use href="#g54" x="128" y="294"/><use href="#g57" x="136" y="294"/><use href="#g41" x="144" y="294"/><use href="#g47" x="152" y="294"/><use href="#g45" x="160" y="294"/><use href="#g35" x="176" y="294"/><use href="#g45" x="184" y="294"/><use href="#g52" x="192" y="294"/><use href="#g55" x="200" y="294"/><use href="#g45" x="208" y="294"/><use href="#g57" x="216" y="294"/><use href="#g41" x="224" y="294"/><use href="#g59" x="232" y="294"/><use href="#g60" x="240" y="294"/><use href="#g57" x="248" y="294"/><use href="#g45" x="256" y="294"/><use href="#g17" x="264" y="294"/><use href="#g8" x="280" y="294"/><use href="#g13" x="288" y="294"/><use href="#g64" x="296" y="294"/><use href="#g21" x="320" y="294"/><use href="#g21" x="40" y="310"/><use href="#g48" x="48" y="310"/><use href="#g45" x="56" y="310"/><use href="#g52" x="64" y="310"/><use href="#g49" x="72" y="310"/><use href="#g43" x="80" y="310"/><use href="#g41" x="88" y="310"/><use href="#g51" x="96" y="310"/><use href="#g29" x="112" y="310"/><use href="#g41" x="120" y="310"/><use href="#g58" x="128" y="310"/><use href="#g58" x="136" y="310"/><use href="#g49" x="152" y="310"/><use href="#g53" x="160" y="310"/><use href="#g35" x="176" y="310"/><use href="#g41" x="184" y="310"/><use href="#g53" x="192" y="310"/><use href="#g50" x="200" y="310"/><use href="#g17" x="208" y="310"/><use href="#g10" x="224" y="310"/><use href="#g16" x="232" y="310"/><use href="#g16" x="240" y="310"/><use href="#g14" x="248" y="310"/><use href="#g11" x="256" y="310"/><use href="#g7" x="264" y="310"/><use href="#g50" x="280" y="310"/><use href="#g49" x="288" y="310"/><use href="#g51" x="296" y="310"/><use href="#g54" x="304" y="310"/><use href="#g47" x="312" y="310"/><use href="#g57" x="320" y="310"/><use href="#g41" x="328" y="310"/><use href="#g52" x="336" y="310"/><use href="#g58" x="344" y="310"/><use href="#g35" x="40" y="326"/><use href="#g41" x="48" y="326"/><use href="#g53" x="56" y="326"/><use href="#g50" x="64" y="326"/><use href="#g49" x="80" y="326"/><use href="#g58" x="88" y="326"/><use href="#g16" x="104" y="326"/><use href="#g16" x="112" y="326"/><use href="#g0" x="120" y="326"/><use href="#g46" x="136" y="326"/><use href="#g60" x="144" y="326"/><use href="#g51" x="152" y="326"/><use href="#g51" x="160" y="326"/><use href="#g32" x="40" y="342"/><use href="#g45" x="48" y="342"/><use href="#g57" x="56" y="342"/><use href="#g43" x="64" y="342"/><use href="#g45" x="72" y="342"/><use href="#g53" x="80" y="342"/><use href="#g59" x="88" y="342"/><use href="#g41" x="96" y="342"/><use href="#g47" x="104" y="342"/><use href="#g45" x="112" y="342"/><use href="#g54" x="128" y="342"/><use href="#g46" x="136" y="342"/><use href="#g35" x="152" y="342"/><use href="#g41" x="160" y="342"/><use href="#g53" x="168" y="342"/><use href="#g50" x="176" y="342"/><use href="#g29" x="192" y="342"/><use href="#g41" x="200" y="342"/><use href="#g58" x="208" y="342"/><use href="#g58" x="216" y="342"/><use href="#g49" x="232" y="342"/><use href="#g53" x="240" y="342"/><use href="#g24" x="256" y="342"/><use href="#g49" x="264" y="342"/><use href="#g57" x="272" y="342"/><use href="#g45" x="280" y="342"/><use href="#g42" x="288" y="342"/><use href="#g41" x="296" y="342"/><use href="#g51" x="304" y="342"/><use href="#g51" x="312" y="342"/><use href="#g17" x="320" y="342"/><use href="#g8" x="336" y="342"/><use href="#g7" x="344" y="342"/><use href="#g7" x="352" y="342"/><use href="#g0" x="360" y="342"/><use href="#g24" x="40" y="358"/><use href="#g49" x="48" y="358"/><use href="#g57" x="56" y="358"/><use href="#g45" x="64" y="358"/><use href="#g42" x="72" y="358"/><use href="#g41" x="80" y="358"/><use href="#g51" x="88" y="358"/><use href="#g51" x="96" y="358"/><use href="#g22" x="112" y="358"/><use href="#g49" x="120" y="358"/><use href="#g41" x="128" y="358"/><use href="#g52" x="136" y="358"/><use href="#g45" x="144" y="358"/><use href="#g59" x="152" y="358"/><use href="#g45" x="160" y="358"/><use href="#g57" x="168" y="358"/><use href="#g17" x="176" y="358"/><use href="#g11" x="192" y="358"/><use href="#g13" x="200" y="358"/><use href="#g14" x="208" y="358"/><use href="#g63" x="224" y="358"/><use href="#g41" x="232" y="358"/><use href="#g57" x="240" y="358"/><use href="#g44" x="248" y="358"/><use href="#g58" x="256" y="358"/><use href="#g20" x="352" y="358"/><use href="#g60" x="360" y="358"/><use href="#g57" x="368" y="358"/><use href="#g53" x="376" y="358"/><use href="#g22" x="392" y="358"/><use href="#g60" x="400" y="358"/><use href="#g57" x="408" y="358"/><use href="#g41" x="416" y="358"/><use href="#g59" x="424" y="358"/><use href="#g49" x="432" y="358"/><use href="#g54" x="440" y="358"/><use href="#g53" x="448" y="358"/><use href="#g17" x="456" y="358"/><use href="#g9" x="472" y="358"/><use href="#g10" x="480" y="358"/><use href="#g58" x="496" y="358"/><use href="#g45" x="504" y="358"/><use href="#g43" x="512" y="358"/><use href="#g54" x="520" y="358"/><use href="#g53" x="528" y="358"/><use href="#g44" x="536" y="358"/><use href="#g58" x="544" y="358"/><use href="#g35" x="24" y="390"/><use href="#g26" x="32" y="390"/><use href="#g33" x="40" y="390"/><use href="#g23" x="48" y="390"/><use href="#g19" x="56" y="390"/><use href="#g35" x="64" y="390"/><use href="#g40" x="80" y="390"/><use href="#g31" x="88" y="390"/><use href="#g30" x="96" y="390"/><use href="#g23" x="104" y="390"/><use href="#g17" x="112" y="390"/><use href="#g35" x="40" y="406"/><use href="#g48" x="48" y="406"/><use href="#g57" x="56" y="406"/><use href="#g45" x="64" y="406"/><use href="#g41" x="72" y="406"/><use href="#g59" x="80" y="406"/><use href="#g29" x="96" y="406"/><use href="#g54" x="104" y="406"/><use href="#g44" x="112" y="406"/><use href="#g45" x="120" y="406"/><use href="#g51" x="128" y="406"/><use href="#g45" x="136" y="406"/><use href="#g44" x="144" y="406"/><use href="#g17" x="152" y="406"/><use href="#g35" x="168" y="406"/><use href="#g48" x="176" y="406"/><use href="#g45" x="184" y="406"/><use href="#g57" x="192" y="406"/><use href="#g52" x="200" y="406"/><use href="#g41" x="208" y="406"/><use href="#g51" x="216" y="406"/><use href="#g57" x="232" y="406"/><use href="#g41" x="240" y="406"/><use href="#g44" x="248" y="406"/><use href="#g49" x="256" y="406"/><use href="#g41" x="264" y="406"/><use href="#g59" x="272" y="406"/><use href="#g49" x="280" y="406"/><use href="#g54" x="288" y="406"/><use href="#g53" x="296" y="406"/><use href="#g46" x="312" y="406"/><use href="#g57" x="320" y="406"/><use href="#g54" x="328" y="406"/><use href="#g52" x="336" y="406"/><use href="#g46" x="352" y="406"/><use href="#g49" x="360" y="406"/><use href="#g57" x="368" y="406"/><use href="#g45" x="376" y="406"/><use href="#g42" x="384" y="406"/><use href="#g41" x="392" y="406"/><use href="#g51" x="400" y="406"/><use href="#g51" x="408" y="406"/><use href="#g33" x="40" y="422"/><use href="#g45" x="48" y="422"/><use href="#g44" x="56" y="422"/><use href="#g17" x="88" y="422"/><use href="#g13" x="104" y="422"/><use href="#g11" x="112" y="422"/><use href="#g10" x="120" y="422"/><use href="#g63" x="136" y="422"/><use href="#g41" x="144" y="422"/><use href="#g57" x="152" y="422"/><use href="#g44" x="160" y="422"/><use href="#g58" x="168" y="422"/><use href="#g4" x="184" y="422"/><use href="#g4" x="192" y="422"/><use href="#g4" x="200" y="422"/><use href="#g1" x="216" y="422"/><use href="#g8" x="224" y="422"/><use href="#g7" x="232" y="422"/><use href="#g5" x="240" y="422"/><use href="#g7" x="248" y="422"/><use href="#g50" x="264" y="422"/><use href="#g38" x="272" y="422"/><use href="#g6" x="280" y="422"/><use href="#g1" x="288" y="422"/><use href="#g58" x="296" y="422"/><use href="#g56" x="304" y="422"/><use href="#g52" x="320" y="422"/><use href="#g2" x="328" y="422"/><use href="#g18" x="344" y="422"/><use href="#g55" x="360" y="422"/><use href="#g54" x="368" y="422"/><use href="#g59" x="376" y="422"/><use href="#g45" x="384" y="422"/><use href="#g53" x="392" y="422"/><use href="#g59" x="400" y="422"/><use href="#g49" x="408" y="422"/><use href="#g41" x="416" y="422"/><use href="#g51" x="424" y="422"/><use href="#g51" x="432" y="422"/><use href="#g63" x="440" y="422"/><use href="#g51" x="456" y="422"/><use href="#g45" x="464" y="422"/><use href="#g59" x="472" y="422"/><use href="#g48" x="480" y="422"/><use href="#g41" x="488" y="422"/><use href="#g51" x="496" y="422"/><use href="#g62" x="512" y="422"/><use href="#g49" x="520" y="422"/><use href="#g59" x="528" y="422"/><use href="#g48" x="536" y="422"/><use href="#g49" x="544" y="422"/><use href="#g53" x="552" y="422"/><use href="#g13" x="568" y="422"/><use href="#g7" x="576" y="422"/><use href="#g58" x="592" y="422"/><use href="#g45" x="600" y="422"/><use href="#g43" x="608" y="422"/><use href="#g2" x="616" y="422"/><use href="#g31" x="40" y="438"/><use href="#g57" x="48" y="438"/><use href="#g41" x="56" y="438"/><use href="#g53" x="64" y="438"/><use href="#g47" x="72" y="438"/><use href="#g45" x="80" y="438"/><use href="#g17" x="88" y="438"/><use href="#g16" x="104" y="438"/><use href="#g10" x="112" y="438"/><use href="#g8" x="120" y="438"/><use href="#g63" x="136" y="438"/><use href="#g41" x="144" y="438"/><use href="#g57" x="152" y="438"/><use href="#g44" x="160" y="438"/><use href="#g58" x="168" y="438"/><use href="#g4" x="184" y="438"/><use href="#g4" x="192" y="438"/><use href="#g4" x="200" y="438"/><use href="#g1" x="216" y="438"/><use href="#g12" x="224" y="438"/><use href="#g5" x="232" y="438"/><use href="#g7" x="240" y="438"/><use href="#g50" x="256" y="438"/><use href="#g38" x="264" y="438"/><use href="#g6" x="272" y="438"/><use href="#g1" x="280" y="438"/><use href="#g58" x="288" y="438"/><use href="#g56" x="296" y="438"/><use href="#g52" x="312" y="438"/><use href="#g2" x="320" y="438"/><use href="#g18" x="336" y="438"/><use href="#g9" x="352" y="438"/><use href="#g53" x="360" y="438"/><use href="#g44" x="368" y="438"/><use href="#g44" x="384" y="438"/><use href="#g45" x="392" y="438"/><use href="#g47" x="400" y="438"/><use href="#g57" x="408" y="438"/><use href="#g45" x="416" y="438"/><use href="#g45" x="424" y="438"/><use href="#g42" x="440" y="438"/><use href="#g60" x="448" y="438"/><use href="#g57" x="456" y="438"/><use href="#g53" x="464" y="438"/><use href="#g58" x="472" y="438"/><use href="#g62" x="488" y="438"/><use href="#g49" x="496" y="438"/><use href="#g59" x="504" y="438"/><use href="#g48" x="512" y="438"/><use href="#g49" x="520" y="438"/><use href="#g53" x="528" y="438"/><use href="#g13" x="544" y="438"/><use href="#g7" x="552" y="438"/><use href="#g58" x="568" y="438"/><use href="#g45" x="576" y="438"/><use href="#g43" x="584" y="438"/><use href="#g2" x="592" y="438"/><use href="#g39" x="40" y="454"/><use href="#g45" x="48" y="454"/><use href="#g51" x="56" y="454"/><use href="#g51" x="64" y="454"/><use href="#g54" x="72" y="454"/><use href="#g62" x="80" y="454"/><use href="#g17" x="88" y="454"/><use href="#g8" x="104" y="454"/><use href="#g11" x="112" y="454"/><use href="#g14" x="120" y="454"/><use href="#g8" x="128" y="454"/><use href="#g63" x="144" y="454"/><use href="#g41" x="152" y="454"/><use href="#g57" x="160" y="454"/><use href="#g44" x="168" y="454"/><use href="#g58" x="176" y="454"/><use href="#g4" x="192" y="454"/><use href="#g4" x="200" y="454"/><use href="#g4" x="208" y="454"/><use href="#g1" x="224" y="454"/><use href="#g9" x="232" y="454"/><use href="#g5" x="240" y="454"/><use href="#g7" x="248" y="454"/><use href="#g50" x="264" y="454"/><use href="#g38" x="272" y="454"/><use href="#g6" x="280" y="454"/><use href="#g1" x="288" y="454"/><use href="#g58" x="296" y="454"/><use href="#g56" x="304" y="454"/><use href="#g52" x="320" y="454"/><use href="#g2" x="328" y="454"/><use href="#g18" x="344" y="454"/><use href="#g55" x="360" y="454"/><use href="#g41" x="368" y="454"/><use href="#g49" x="376" y="454"/><use href="#g53" x="384" y="454"/><use href="#g62" x="400" y="454"/><use href="#g49" x="408" y="454"/><use href="#g59" x="416" y="454"/><use href="#g48" x="424" y="454"/><use href="#g49" x="432" y="454"/><use href="#g53" x="440" y="454"/><use href="#g13" x="456" y="454"/><use href="#g7" x="464" y="454"/><use href="#g58" x="480" y="454"/><use href="#g45" x="488" y="454"/><use href="#g43" x="496" y="454"/><use href="#g2" x="504" y="454"/></g></svg></div>
  <div id="lscroll" class="abs">
    <svg class="abs" style="left:1234px;top:4px" width="8" height="8"><polygon points="0,0 3.5,0 6.5,3.5 3.5,7 0,7 3,3.5" fill="#cbbcb2"/></svg>
    <svg class="abs" style="left:5px;top:4px" width="8" height="8"><polygon points="3,0 6.5,0 3.5,3.5 6.5,7 3,7 0,3.5" fill="#cbbcb2"/></svg>
  </div>
</div>

<div id="rw" class="abs">
  <div class="abs cy"></div>
  <svg class="abs" style="left:9px;top:11px" width="16" height="13" viewBox="0 0 16 13" shape-rendering="crispEdges">
    <rect x="0" y="0" width="16" height="12" fill="#fff"/>
    <rect x="0" y="0" width="16" height="1" fill="#5b6370"/><rect x="0" y="11" width="16" height="1" fill="#5b6370"/>
    <rect x="0" y="0" width="1" height="12" fill="#5b6370"/><rect x="15" y="0" width="1" height="12" fill="#5b6370"/>
    <rect x="0" y="0" width="1" height="1" fill="#111"/><rect x="15" y="0" width="1" height="1" fill="#111"/><rect x="0" y="11" width="1" height="1" fill="#111"/><rect x="15" y="11" width="1" height="1" fill="#111"/>
    <rect x="1" y="12" width="14" height="1" fill="#e9a486"/>
    <rect x="3.5" y="2.5" width="7" height="7" fill="none" stroke="#4cc6f2" stroke-width="1"/>
    <polygon points="9,4 12,4 14,6 14,9 12,11 9,11 7,9 7,6" fill="#ff0a8c"/>
  </svg>
  <div id="rtitle" class="abs">Thermal Radiation Threat Zone</div>
  <div class="abs btn" style="left:516px"><div class="abs in"></div>
    <div class="abs" style="left:9px;top:7px;width:11px;height:5px;box-sizing:border-box;border:1px solid #3c4250;border-radius:1px;background:#fff"></div></div>
  <div class="abs btn" style="left:550px"><div class="abs in"></div>
    <div class="abs" style="left:9px;top:3px;width:11px;height:9px;box-sizing:border-box;border:1px solid #3c4250;border-radius:1px;background:#fff">
      <div class="abs" style="left:2px;top:2px;width:5px;height:3px;box-sizing:border-box;background:#7fa3c7;border:1px solid #3c4250"></div></div></div>
  <div class="abs btn cls" style="left:584px"><div class="abs in" style="border-color:rgba(255,220,210,.6)"></div>
    <svg class="abs" style="left:9px;top:3px" width="11" height="9" viewBox="0 0 11 9"><polygon points="0.5,0.5 3.8,0.5 5.5,2.6 7.2,0.5 10.5,0.5 7.4,4.5 10.5,8.5 7.2,8.5 5.5,6.4 3.8,8.5 0.5,8.5 3.6,4.5" fill="#fff" stroke="#3b4660" stroke-width="1"/></svg>
  </div>
  <div id="rclient" class="abs">
<svg class="abs" style="left:-629px;top:-36px" width="1252" height="536" viewBox="0 0 1252 536">
<defs><pattern id="pr" patternUnits="userSpaceOnUse" x="0" y="0" width="8" height="8"><rect x="1" y="4" width="1" height="1" fill="#f00"/><rect x="5" y="4" width="1" height="1" fill="#f00"/><rect x="3" y="0" width="1" height="1" fill="#f00"/><rect x="7" y="0" width="1" height="1" fill="#f00"/></pattern><pattern id="po" patternUnits="userSpaceOnUse" x="0" y="0" width="4" height="4"><rect x="1" y="0" width="1" height="1" fill="#ff9900"/><rect x="3" y="0" width="1" height="1" fill="#ff9900"/><rect x="0" y="2" width="1" height="1" fill="#ff9900"/><rect x="2" y="2" width="1" height="1" fill="#ff9900"/></pattern></defs>
<circle cx="872" cy="224" r="132.25" fill="#ffff00" stroke="#000" stroke-width="1" shape-rendering="crispEdges"/>
<circle cx="872" cy="224" r="84.2" fill="#fff" shape-rendering="crispEdges"/>
<circle cx="872" cy="224" r="84.2" fill="url(#po)" stroke="#ff9900" stroke-width="1" shape-rendering="crispEdges"/>
<circle cx="872" cy="224" r="58.1" fill="#fff" shape-rendering="crispEdges"/>
<circle cx="872" cy="224" r="58.1" fill="url(#pr)" stroke="#f00" stroke-width="1" shape-rendering="crispEdges"/>
<g shape-rendering="crispEdges" fill="#000"><rect x="714" y="66" width="1" height="317"/><rect x="793" y="66" width="1" height="317"/><rect x="951" y="66" width="1" height="317"/><rect x="1030" y="66" width="1" height="317"/><rect x="1109" y="66" width="1" height="317"/><rect x="1188" y="66" width="1" height="317"/><rect x="870" y="66" width="3" height="317"/><rect x="714" y="66" width="475" height="1"/><rect x="714" y="145" width="475" height="1"/><rect x="714" y="303" width="475" height="1"/><rect x="714" y="382" width="475" height="1"/><rect x="714" y="222" width="475" height="3"/></g>
<text x="693" y="54" xml:space="preserve">miles</text>
<text x="694" y="71" xml:space="preserve">1</text>
<text x="674" y="150" xml:space="preserve">&#160;.5</text>
<ellipse cx="679.1" cy="145" rx="3.2" ry="4.45" fill="none" stroke="#000" stroke-width="1.3"/>
<text x="694" y="229" xml:space="preserve">&#160;</text>
<ellipse cx="699.1" cy="224" rx="3.2" ry="4.45" fill="none" stroke="#000" stroke-width="1.3"/>
<text x="674" y="308" xml:space="preserve">&#160;.5</text>
<ellipse cx="679.1" cy="303" rx="3.2" ry="4.45" fill="none" stroke="#000" stroke-width="1.3"/>
<text x="694" y="387" xml:space="preserve">1</text>
<text x="709" y="399" xml:space="preserve">1</text>
<text x="778" y="399" xml:space="preserve">&#160;.5</text>
<ellipse cx="783.1" cy="394" rx="3.2" ry="4.45" fill="none" stroke="#000" stroke-width="1.3"/>
<text x="866" y="399" xml:space="preserve">&#160;</text>
<ellipse cx="871.1" cy="394" rx="3.2" ry="4.45" fill="none" stroke="#000" stroke-width="1.3"/>
<text x="936" y="399" xml:space="preserve">&#160;.5</text>
<ellipse cx="941.1" cy="394" rx="3.2" ry="4.45" fill="none" stroke="#000" stroke-width="1.3"/>
<text x="1025" y="399" xml:space="preserve">1</text>
<text x="1094" y="399" xml:space="preserve">1.5</text>
<text x="1183" y="399" xml:space="preserve">2</text>
<text x="935" y="416" xml:space="preserve">miles</text>
<text x="696" y="441" xml:space="preserve">&gt;=&#160;1&#160;.&#160;&#160;kW/(sq&#160;m)&#160;=&#160;potentially&#160;lethal&#160;within&#160;6&#160;&#160;sec</text>
<ellipse cx="741.1" cy="436" rx="3.2" ry="4.45" fill="none" stroke="#000" stroke-width="1.3"/>
<ellipse cx="761.1" cy="436" rx="3.2" ry="4.45" fill="none" stroke="#000" stroke-width="1.3"/>
<ellipse cx="1171.1" cy="436" rx="3.2" ry="4.45" fill="none" stroke="#000" stroke-width="1.3"/>
<text x="696" y="462" xml:space="preserve">&gt;=&#160;5.&#160;&#160;kW/(sq&#160;m)&#160;=&#160;2nd&#160;degree&#160;burns&#160;within&#160;6&#160;&#160;sec</text>
<ellipse cx="751.1" cy="457" rx="3.2" ry="4.45" fill="none" stroke="#000" stroke-width="1.3"/>
<ellipse cx="1141.1" cy="457" rx="3.2" ry="4.45" fill="none" stroke="#000" stroke-width="1.3"/>
<text x="696" y="483" xml:space="preserve">&gt;=&#160;2.&#160;&#160;kW/(sq&#160;m)&#160;=&#160;pain&#160;within&#160;6&#160;&#160;sec</text>
<ellipse cx="751.1" cy="478" rx="3.2" ry="4.45" fill="none" stroke="#000" stroke-width="1.3"/>
<ellipse cx="1021.1" cy="478" rx="3.2" ry="4.45" fill="none" stroke="#000" stroke-width="1.3"/>
<g shape-rendering="crispEdges">
<rect x="650.5" y="430.5" width="31" height="15" fill="url(#pr)" stroke="#f00" stroke-width="3"/>
<rect x="650.5" y="451.5" width="31" height="15" fill="url(#po)" stroke="#ff9900" stroke-width="3"/>
<rect x="650.5" y="472.5" width="31" height="15" fill="#ffff00" stroke="#000" stroke-width="3"/>
<rect x="649" y="429" width="1" height="1" fill="#fff"/>
<rect x="682" y="429" width="1" height="1" fill="#fff"/>
<rect x="649" y="446" width="1" height="1" fill="#fff"/>
<rect x="682" y="446" width="1" height="1" fill="#fff"/>
<rect x="649" y="450" width="1" height="1" fill="#fff"/>
<rect x="682" y="450" width="1" height="1" fill="#fff"/>
<rect x="649" y="467" width="1" height="1" fill="#fff"/>
<rect x="682" y="467" width="1" height="1" fill="#fff"/>
<rect x="649" y="471" width="1" height="1" fill="#fff"/>
<rect x="682" y="471" width="1" height="1" fill="#fff"/>
<rect x="649" y="488" width="1" height="1" fill="#fff"/>
<rect x="682" y="488" width="1" height="1" fill="#fff"/>
</g>
</svg>
  </div>
</div>
<div class="abs" style="left:1248px;top:17px;width:10px;height:18px;box-sizing:border-box;border-top:1px solid #8a94a2;border-bottom:1px solid #8a94a2;background:#dfe7f0"></div>
<div class="abs" style="left:623px;top:88px;width:5px;height:39px;background:linear-gradient(to bottom,#c9d8e8,#d4e1ed 50%,#d8e4ef)"></div>
<div class="abs" style="left:1241px;top:88px;width:5px;height:39px;background:linear-gradient(to bottom,#c9d8e8,#d4e1ed 50%,#d8e4ef)"></div>
</body></html>
